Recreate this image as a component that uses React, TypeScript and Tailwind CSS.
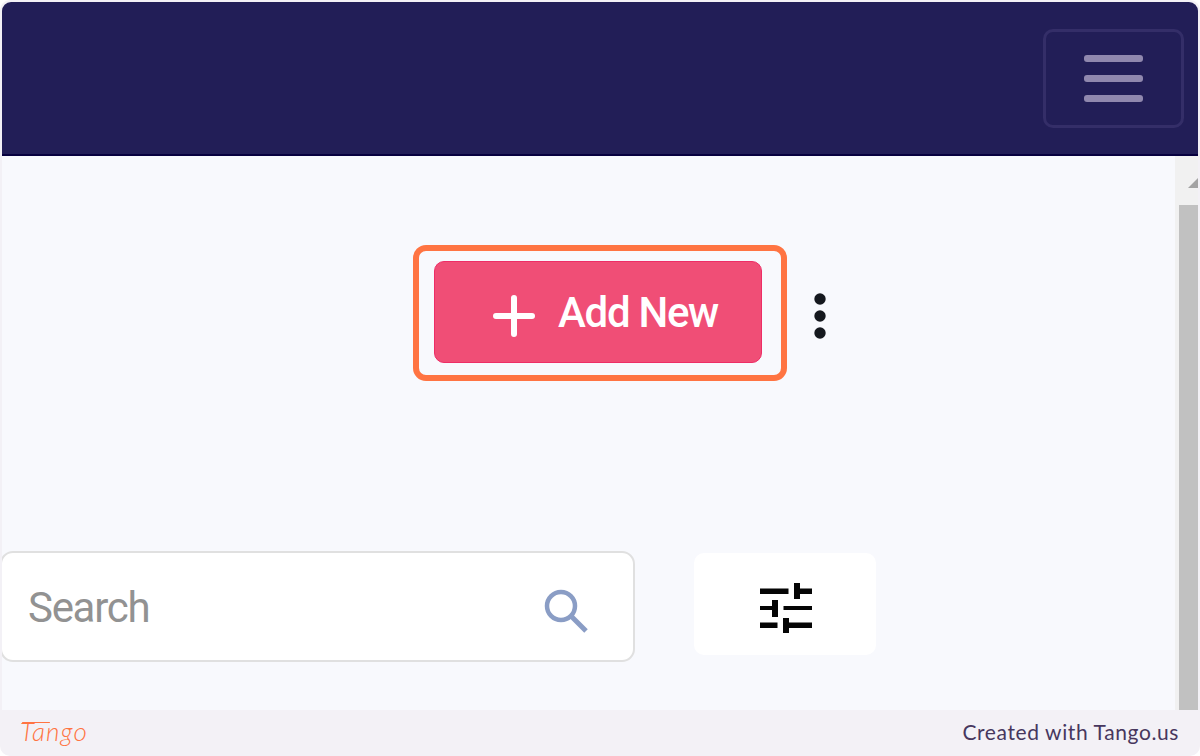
import React from "react";

const Header = () => {
  return (
    <header className="flex h-[154px] shrink-0 items-start justify-end border-b-2 border-[#07003f] bg-[#221e57] pt-[27px] pr-[14px]">
      <button
        aria-label="Menu"
        className="flex h-[99px] w-[141px] flex-col items-center justify-center gap-[13px] rounded-[10px] border-[3px] border-[#342e68]"
      >
        <span className="h-[7px] w-[59px] rounded-[3px] bg-[#9088ae]" />
        <span className="h-[7px] w-[59px] rounded-[3px] bg-[#9088ae]" />
        <span className="h-[7px] w-[59px] rounded-[3px] bg-[#9088ae]" />
      </button>
    </header>
  );
};

const Actions = () => {
  return (
    <div className="flex items-center pl-[411px]">
      {/* highlighted step */}
      <div className="flex h-[136px] w-[374px] rounded-[13px] border-[6px] border-[#ff7442] pt-[10px] pl-[15px]">
        <button className="flex h-[102px] w-[328px] items-center rounded-[10px] border-[1.5px] border-[#ee2d66] bg-[#f04e76] pl-[58px] text-white">
          <svg width="42" height="42" viewBox="0 0 42 42" className="mt-[7px]">
            <path
              d="M3 21h36M21 3v36"
              stroke="currentColor"
              strokeWidth="6"
              strokeLinecap="round"
            />
          </svg>
          <span className="mt-[2px] ml-[23px] text-[42px] leading-none font-medium tracking-[-1.3px] whitespace-nowrap">
            Add New
          </span>
        </button>
      </div>
      <svg
        width="14"
        height="48"
        viewBox="0 0 14 48"
        fill="#15181e"
        className="mt-[5px] ml-[26px]"
      >
        <circle cx="7" cy="7" r="5.700" />
        <circle cx="7" cy="24" r="5.700" />
        <circle cx="7" cy="41" r="5.700" />
      </svg>
    </div>
  );
};

const SearchBar = () => {
  return (
    <div className="mt-[170px] flex items-start">
      <div className="-ml-[2px] flex h-[111px] w-[635px] items-center justify-between rounded-[13px] border-2 border-[#e0e0e0] bg-white pr-[44px] pl-[26px]">
        <span className="mt-[2px] text-[42px] leading-none tracking-[-1.3px] text-[#929292]">
          Search
        </span>
        <svg
          width="46"
          height="46"
          viewBox="0 0 46 46"
          fill="none"
          stroke="#8a9dc5"
          className="mt-[9px]"
        >
          <circle cx="18" cy="18" r="14" strokeWidth="4.500" />
          <path d="M28 28 43 43" strokeWidth="5" />
        </svg>
      </div>
      <button
        aria-label="Filters"
        className="mt-[2px] ml-[59px] flex h-[102px] w-[182px] items-center justify-center rounded-[10px] bg-white"
      >
        <svg
          width="52"
          height="50"
          viewBox="0 0 52 50"
          fill="#050505"
          className="mr-[-1px] mt-[7px]"
        >
          <path d="M0 5.500h28.500v5.500H0zM34 0h6v5.500h12v5.500H40v5H34z" />
          <path d="M0 23h12v-6h6v17h-6v-7H0zM23.500 23H52v4H23.500z" />
          <path d="M0 39.500h17.500v5.500H0zM23 35h6v4.500h23v5.500H29v5h-6z" />
        </svg>
      </button>
    </div>
  );
};

const Scrollbar = () => {
  return (
    <div className="flex w-[23px] shrink-0 flex-col bg-[#f1f1f1]">
      <div className="flex h-[49px] shrink-0 justify-end pt-[22px]">
        <svg width="10" height="10" viewBox="0 0 10 10" fill="#a3a3a3">
          <path d="M0 10 10 0v10z" />
        </svg>
      </div>
      <div className="ml-[4px] flex-1 bg-[#c1c1c1]" />
    </div>
  );
};

const Footer = () => {
  return (
    <footer className="flex h-[46px] items-center justify-between pr-[21px] pl-[20px]">
      <span className="relative -mt-[5px] font-['Lato','Liberation_Sans',sans-serif] text-[26px] leading-none font-light tracking-[1.1px] text-[#ff7442] italic">
        Tango
        {/* long crossbar of the wordmark */}
        <span className="absolute top-[4px] left-[2px] h-[1.5px] w-[28px] rounded-full bg-[#ff7442]" />
      </span>
      <span className="-mt-[3px] font-['Lato','Liberation_Sans',sans-serif] text-[21px] leading-none tracking-[0.6px] text-[#47375e]">
        Created with Tango.us
      </span>
    </footer>
  );
};

const App = () => {
  return (
    <div className="h-[756px] w-[1200px] overflow-hidden rounded-[10px] bg-[#f3f1f6] font-['Roboto','Liberation_Sans',sans-serif]">
      <div className="mx-[2px] flex h-[710px] flex-col pt-[2px]">
        <div className="flex flex-1 flex-col overflow-hidden rounded-t-[9px] bg-[#f8f9fd]">
          <Header />
          <div className="flex flex-1">
            <main className="flex-1 pt-[89px]">
              <Actions />
              <SearchBar />
            </main>
            <Scrollbar />
          </div>
        </div>
      </div>
      <Footer />
    </div>
  );
};

export default App;
